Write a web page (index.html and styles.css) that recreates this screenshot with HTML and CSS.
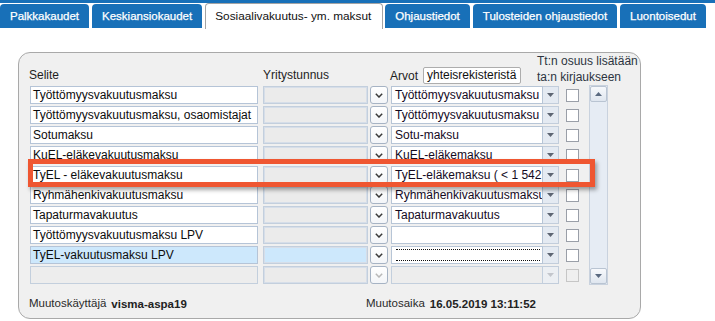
FILE: index.html
```html
<!DOCTYPE html>
<html lang="fi">
<head>
<meta charset="utf-8">
<title>Sosiaalivakuutus- ym. maksut</title>
<link rel="stylesheet" href="styles.css">
</head>
<body>
<div class="topstrip"></div>
<div class="tabs">
  <div class="tab">Palkkakaudet</div>
  <div class="tab">Keskiansiokaudet</div>
  <div class="tab active">Sosiaalivakuutus- ym. maksut</div>
  <div class="tab">Ohjaustiedot</div>
  <div class="tab">Tulosteiden ohjaustiedot</div>
  <div class="tab">Luontoisedut</div>
</div>

<div class="panel">
  <div class="head">
    <div class="h-selite">Selite</div>
    <div class="h-ytunnus">Yritystunnus</div>
    <div class="h-arvot">Arvot <span class="srcbox">yhteisrekisteristä</span></div>
    <div class="h-tt">Tt:n osuus lisätään<br>ta:n kirjaukseen</div>
  </div>

  <div class="body">
    <div class="rows">
      <div class="row">
        <div class="selite">Työttömyysvakuutusmaksu</div>
        <div class="ytunnus"></div>
        <div class="chev"><svg viewBox="0 0 8 5" width="8" height="5"><polyline points="0.8,0.8 4,4 7.2,0.8"/></svg></div>
        <div class="combo"><div class="ctext">Työttömyysvakuutusmaksu</div><div class="carrow"><svg viewBox="0 0 7 4" width="7" height="4"><polygon points="0,0 7,0 3.5,4"/></svg></div></div>
        <div class="check"></div>
      </div>
      <div class="row">
        <div class="selite">Työttömyysvakuutusmaksu, osaomistajat</div>
        <div class="ytunnus"></div>
        <div class="chev"><svg viewBox="0 0 8 5" width="8" height="5"><polyline points="0.8,0.8 4,4 7.2,0.8"/></svg></div>
        <div class="combo"><div class="ctext">Työttömyysvakuutusmaksu</div><div class="carrow"><svg viewBox="0 0 7 4" width="7" height="4"><polygon points="0,0 7,0 3.5,4"/></svg></div></div>
        <div class="check"></div>
      </div>
      <div class="row">
        <div class="selite">Sotumaksu</div>
        <div class="ytunnus"></div>
        <div class="chev"><svg viewBox="0 0 8 5" width="8" height="5"><polyline points="0.8,0.8 4,4 7.2,0.8"/></svg></div>
        <div class="combo"><div class="ctext">Sotu-maksu</div><div class="carrow"><svg viewBox="0 0 7 4" width="7" height="4"><polygon points="0,0 7,0 3.5,4"/></svg></div></div>
        <div class="check"></div>
      </div>
      <div class="row">
        <div class="selite">KuEL-eläkevakuutusmaksu</div>
        <div class="ytunnus"></div>
        <div class="chev"><svg viewBox="0 0 8 5" width="8" height="5"><polyline points="0.8,0.8 4,4 7.2,0.8"/></svg></div>
        <div class="combo"><div class="ctext">KuEL-eläkemaksu</div><div class="carrow"><svg viewBox="0 0 7 4" width="7" height="4"><polygon points="0,0 7,0 3.5,4"/></svg></div></div>
        <div class="check"></div>
      </div>
      <div class="row">
        <div class="selite">TyEL - eläkevakuutusmaksu</div>
        <div class="ytunnus"></div>
        <div class="chev"><svg viewBox="0 0 8 5" width="8" height="5"><polyline points="0.8,0.8 4,4 7.2,0.8"/></svg></div>
        <div class="combo"><div class="ctext">TyEL-eläkemaksu ( &lt; 1 542</div><div class="carrow"><svg viewBox="0 0 7 4" width="7" height="4"><polygon points="0,0 7,0 3.5,4"/></svg></div></div>
        <div class="check"></div>
      </div>
      <div class="row">
        <div class="selite">Ryhmähenkivakuutusmaksu</div>
        <div class="ytunnus"></div>
        <div class="chev"><svg viewBox="0 0 8 5" width="8" height="5"><polyline points="0.8,0.8 4,4 7.2,0.8"/></svg></div>
        <div class="combo"><div class="ctext">Ryhmähenkivakuutusmaksu</div><div class="carrow"><svg viewBox="0 0 7 4" width="7" height="4"><polygon points="0,0 7,0 3.5,4"/></svg></div></div>
        <div class="check"></div>
      </div>
      <div class="row">
        <div class="selite">Tapaturmavakuutus</div>
        <div class="ytunnus"></div>
        <div class="chev"><svg viewBox="0 0 8 5" width="8" height="5"><polyline points="0.8,0.8 4,4 7.2,0.8"/></svg></div>
        <div class="combo"><div class="ctext">Tapaturmavakuutus</div><div class="carrow"><svg viewBox="0 0 7 4" width="7" height="4"><polygon points="0,0 7,0 3.5,4"/></svg></div></div>
        <div class="check"></div>
      </div>
      <div class="row">
        <div class="selite">Työttömyysvakuutusmaksu LPV</div>
        <div class="ytunnus"></div>
        <div class="chev"><svg viewBox="0 0 8 5" width="8" height="5"><polyline points="0.8,0.8 4,4 7.2,0.8"/></svg></div>
        <div class="combo"><div class="ctext"></div><div class="carrow"><svg viewBox="0 0 7 4" width="7" height="4"><polygon points="0,0 7,0 3.5,4"/></svg></div></div>
        <div class="check"></div>
      </div>
      <div class="row selected">
        <div class="selite">TyEL-vakuutusmaksu LPV</div>
        <div class="ytunnus"></div>
        <div class="chev"><svg viewBox="0 0 8 5" width="8" height="5"><polyline points="0.8,0.8 4,4 7.2,0.8"/></svg></div>
        <div class="combo"><div class="ctext"><div class="focus"></div></div><div class="carrow"><svg viewBox="0 0 7 4" width="7" height="4"><polygon points="0,0 7,0 3.5,4"/></svg></div></div>
        <div class="check"></div>
      </div>
      <div class="row disabled">
        <div class="selite"></div>
        <div class="ytunnus"></div>
        <div class="chev"><svg viewBox="0 0 8 5" width="8" height="5"><polyline points="0.8,0.8 4,4 7.2,0.8"/></svg></div>
        <div class="combo"><div class="ctext"></div><div class="carrow"><svg viewBox="0 0 7 4" width="7" height="4"><polygon points="0,0 7,0 3.5,4"/></svg></div></div>
        <div class="check"></div>
      </div>
    </div>
    <div class="scroll">
      <div class="sbtn"><svg viewBox="0 0 7 4" width="7" height="4"><polygon points="0,4 7,4 3.5,0"/></svg></div>
      <div class="strack"></div>
      <div class="sbtn"><svg viewBox="0 0 7 4" width="7" height="4"><polygon points="0,0 7,0 3.5,4"/></svg></div>
    </div>
  </div>

  <div class="foot">
    <div class="fgroup first"><span class="flabel">Muutoskäyttäjä</span><span class="fvalue">visma-aspa19</span></div>
    <div class="fgroup"><span class="flabel">Muutosaika</span><span class="fvalue">16.05.2019 13:11:52</span></div>
  </div>

  <div class="highlight"></div>
</div>
</body>
</html>
```

FILE: styles.css
```css
* { box-sizing: border-box; }

html, body {
  margin: 0;
  padding: 0;
  background: #ffffff;
  font-family: "Liberation Sans", Arial, sans-serif;
  font-size: 12px;
  color: #111;
  width: 715px;
  height: 321px;
  overflow: hidden;
}

.topstrip {
  height: 3px;
  background: #1870b8;
}

.tabs {
  display: flex;
  align-items: flex-start;
  height: 27px;
  white-space: nowrap;
}

.tab {
  margin-top: 1px;
  height: 24px;
  line-height: 24px;
  padding: 0 10px 0 10px;
  margin-right: 3px;
  background: #1870b8;
  color: #ffffff;
  font-size: 11.5px;
  border-radius: 4px 4px 0 0;
  flex: none;
  -webkit-text-stroke: 0.25px #ffffff;
}

.tab.active {
  margin-top: 0;
  height: 26px;
  line-height: 25px;
  padding: 0 11px 0 9px;
  background: #ffffff;
  color: #111;
  font-size: 11.8px;
  border: 1px solid #a4a4a4;
  border-bottom: none;
  margin-right: 2px;
  -webkit-text-stroke: 0;
}

.panel {
  position: relative;
  margin: 22px 0 0 18px;
  width: 623px;
  height: 267px;
  background: #f0f0f0;
  border: 1px solid #a9a9a9;
  border-radius: 12px;
}

.head {
  display: flex;
  align-items: flex-end;
  height: 31px;
  margin-bottom: 2px;
  padding-left: 10px;
  line-height: 16px;
  color: #1e1e1e;
}

.h-selite { width: 234px; padding-bottom: 1px; }
.h-ytunnus { width: 127px; padding-bottom: 1px; }
.h-arvot {
  display: flex;
  align-items: center;
  width: 147px;
}
.srcbox {
  margin-left: 5px;
  width: 98px;
  height: 17px;
  line-height: 15px;
  padding-left: 3px;
  background: #ffffff;
  border: 1px solid #adadad;
  border-radius: 2px;
  color: #111;
  white-space: nowrap;
  overflow: hidden;
}
.h-tt {
  margin-bottom: -1px;
  color: #2c3440;
  white-space: nowrap;
}

.body {
  display: flex;
  padding-left: 11px;
}

.rows {
  display: flex;
  flex-direction: column;
  gap: 2px;
}

.row {
  display: flex;
  align-items: center;
  height: 18px;
}

.selite {
  width: 228px;
  height: 18px;
  line-height: 16px;
  padding-left: 2px;
  background: #ffffff;
  border: 1px solid #b5c4d7;
  white-space: nowrap;
  overflow: hidden;
  color: #0c0c0c;
}

.ytunnus {
  width: 105px;
  height: 18px;
  margin-left: 5px;
  background: #ebebeb;
  border: 1px solid #c3cfdd;
  box-shadow: inset 0 0 0 1px #d6dee9;
}

.chev {
  width: 18px;
  height: 18px;
  margin-left: 2px;
  display: flex;
  align-items: center;
  justify-content: center;
  background: linear-gradient(#ffffff, #f3f5f8);
  border: 1px solid #a6b3c4;
  border-radius: 3px;
}
.chev svg polyline {
  fill: none;
  stroke: #3a3a3a;
  stroke-width: 1.5;
}

.combo {
  display: flex;
  width: 168px;
  height: 18px;
  margin-left: 3px;
}
.ctext {
  flex: 1;
  height: 18px;
  line-height: 16px;
  padding-left: 3px;
  background: #ffffff;
  border: 1px solid #b7c5d6;
  white-space: nowrap;
  overflow: hidden;
  color: #140a1e;
}
.carrow {
  width: 16px;
  height: 18px;
  display: flex;
  align-items: center;
  justify-content: center;
  background: #e4eaf2;
  border: 1px solid #c2cddb;
  border-left: none;
}
.carrow svg polygon { fill: #5d6573; }

.check {
  width: 13px;
  height: 13px;
  margin-left: 7px;
  background: #ffffff;
  border: 1px solid #9a9fa8;
}

.row.selected .selite,
.row.selected .ytunnus {
  background: #cde8fc;
}

.focus {
  margin: 2px 2px 0 1px;
  height: 12px;
  border-top: 1px dotted #111;
  border-bottom: 1px dotted #111;
}

.row.disabled .selite,
.row.disabled .ctext {
  background: #ededed;
  border-color: #c3cfdd;
}
.row.disabled .chev svg polyline { stroke: #b8b8b8; }
.row.disabled .carrow { background: #eceff3; }
.row.disabled .carrow svg polygon { fill: #c3c6cc; }
.row.disabled .check {
  background: #efefef;
  border-color: #c6c6c6;
}

.scroll {
  display: flex;
  flex-direction: column;
  width: 19px;
  margin-left: 10px;
  margin-top: -1px;
  margin-bottom: -1px;
  background: #e6ecf4;
  border: 1px solid #c9d2de;
}
.sbtn {
  height: 16px;
  display: flex;
  align-items: center;
  justify-content: center;
  background: linear-gradient(#f7f9fc, #dfe6ef);
  border: 1px solid #b9c4d2;
  border-radius: 2px;
}
.sbtn svg polygon { fill: #5a6a80; }
.strack { flex: 1; }

.foot {
  display: flex;
  align-items: baseline;
  margin-top: 11px;
  padding-left: 10px;
  line-height: 16px;
}
.fgroup {
  display: flex;
  align-items: baseline;
  white-space: nowrap;
}
.fgroup.first { width: 337px; }
.flabel {
  font-size: 11.5px;
  color: #2a2a2a;
}
.fvalue {
  margin-left: 5px;
  font-size: 11.5px;
  font-weight: bold;
  color: #222;
  position: relative;
  top: 1px;
}

.highlight {
  position: absolute;
  left: 9px;
  top: 106px;
  width: 567px;
  height: 28px;
  border: 5px solid #ef5631;
  box-shadow: 2px 3px 4px rgba(0, 0, 0, 0.35);
  pointer-events: none;
}
```
